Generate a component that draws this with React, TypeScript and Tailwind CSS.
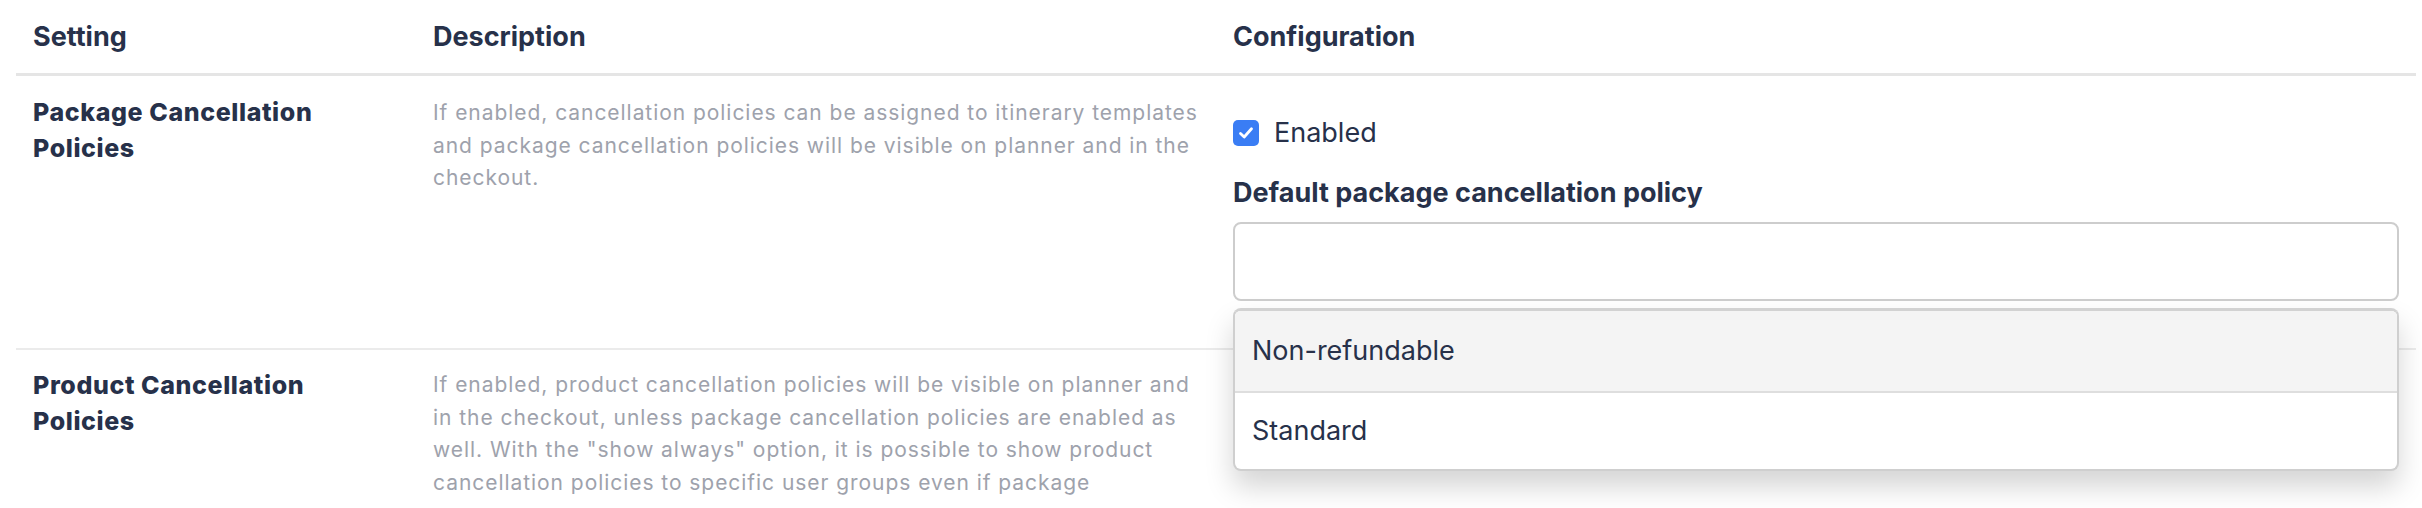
import React from "react";

function Checkbox() {
  return (
    <span className="flex h-[26px] w-[26px] shrink-0 items-center justify-center rounded-[5px] bg-[#3a7df4]">
      <svg width="18" height="18" viewBox="0 0 18 18" fill="none">
        <path d="M3.5 9.5 L7.2 13 L14.5 4.8" stroke="#ffffff" strokeWidth="2.8" strokeLinecap="round" strokeLinejoin="round" />
      </svg>
    </span>
  );
}

export default function App() {
  return (
    <div className="h-[508px] w-full overflow-hidden bg-white pl-4 pr-[6px] font-['Inter',sans-serif] text-[#27314a]">
      {/* Header */}
      <div className="grid grid-cols-[400px_800px_1200px] border-b-[3px] border-[#e5e5e5]">
        <div className="px-[17px] pb-[16px] pt-[17px] text-[27px] font-bold leading-[40px]">Setting</div>
        <div className="px-[17px] pb-[16px] pt-[17px] text-[27px] font-bold leading-[40px]">Description</div>
        <div className="px-[17px] pb-[16px] pt-[17px] text-[27px] font-bold leading-[40px]">Configuration</div>
      </div>

      {/* Row 1 */}
      <div className="grid grid-cols-[400px_800px_1200px] border-b-2 border-[#ebebeb]">
        <div className="px-[17px] pt-[18px] text-[25px] font-extrabold leading-[36px] tracking-[0.6px]">
          Package Cancellation Policies
        </div>
        <div className="px-[17px] pt-[21px] text-[21px] leading-[32.5px] tracking-[0.95px] text-[#9ea2ac]">
          If enabled, cancellation policies can be assigned to itinerary templates and package cancellation policies will be visible on planner and in the checkout.
        </div>
        <div className="relative z-10 px-[17px] pb-[47px] pt-[44px]">
          <div className="flex h-[26px] items-center gap-[15px]">
            <Checkbox />
            <span className="text-[27px] leading-[26px]">Enabled</span>
          </div>
          <div className="mt-[29px] text-[27px] font-bold leading-[36px]">Default package cancellation policy</div>
          <div className="relative mt-[11px]">
            <div className="h-[79px] rounded-[8px] border-2 border-[#cdcdcd] bg-white" />
            <div className="absolute left-0 right-0 top-[86px] overflow-hidden rounded-[8px] border-2 border-[#cfcfcf] border-t-[3px] border-t-[#d2d2d2] bg-white shadow-[0_16px_28px_rgba(0,0,0,0.17)]">
              <div className="flex h-[82px] items-center border-b-2 border-[#dedede] bg-[#f4f4f4] px-[17px] text-[27px]">
                Non-refundable
              </div>
              <div className="flex h-[76px] items-center px-[17px] text-[27px]">Standard</div>
            </div>
          </div>
        </div>
      </div>

      {/* Row 2 */}
      <div className="grid grid-cols-[400px_800px_1200px]">
        <div className="px-[17px] pt-[17px] text-[25px] font-extrabold leading-[36px] tracking-[0.6px]">
          Product Cancellation Policies
        </div>
        <div className="px-[17px] pt-[19px] text-[21px] leading-[32.5px] tracking-[0.95px] text-[#9ea2ac]">
          If enabled, product cancellation policies will be visible on planner and in the checkout, unless package cancellation policies are enabled as well. With the "show always" option, it is possible to show product cancellation policies to specific user groups even if package
        </div>
        <div className="px-[17px] pt-[44px]" />
      </div>
    </div>
  );
}
